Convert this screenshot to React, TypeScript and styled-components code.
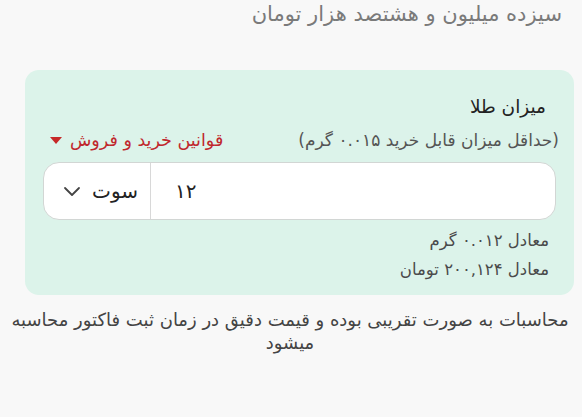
import styled, { createGlobalStyle } from 'styled-components';

const GlobalStyle = createGlobalStyle`
  body {
    margin: 0;
    background: #f8f8f8;
    font-family: "DejaVu Sans", "Noto Sans", sans-serif;
  }
`;

const Page = styled.div`
  direction: rtl;
`;

const AmountWords = styled.div`
  font-size: 21px;
  color: #7a7a7a;
  padding-right: 20px;
  line-height: 28px;
`;

const Card = styled.div`
  margin: 42px 8px 0 25px;
  background: #dcf3ea;
  border-radius: 14px;
  padding: 23px 15px 11px 18px;
`;

const Title = styled.div`
  font-size: 18.5px;
  color: #222;
  padding-right: 13px;
  line-height: 28px;
`;

const InfoRow = styled.div`
  display: flex;
  justify-content: space-between;
  align-items: center;
  margin-top: 6px;
  line-height: 26px;
`;

const Hint = styled.span`
  font-size: 17px;
  color: #555;
`;

const RulesLink = styled.button`
  display: flex;
  align-items: center;
  gap: 8px;
  background: none;
  border: 0;
  padding: 0 0 0 7px;
  font: inherit;
  font-size: 17.5px;
  color: #c0272d;
  cursor: pointer;
`;

const Triangle = styled.span`
  width: 0;
  height: 0;
  border-left: 6px solid transparent;
  border-right: 6px solid transparent;
  border-top: 7px solid #c62828;
`;

const InputBox = styled.div`
  display: flex;
  align-items: stretch;
  height: 58px;
  margin: 9px 3px 0 0;
  box-sizing: border-box;
  background: #fff;
  border: 1px solid #d2d6d4;
  border-radius: 16px;
  overflow: hidden;
`;

const AmountInput = styled.input`
  flex: 1;
  min-width: 0;
  border: 0;
  outline: none;
  direction: ltr;
  text-align: left;
  font: inherit;
  font-size: 20px;
  color: #222;
  padding: 0 24px;
  background: transparent;
  caret-color: #222;
`;

const UnitSelect = styled.div`
  display: flex;
  align-items: center;
  gap: 8px;
  width: 107px;
  padding: 0 12px 0 10px;
  box-sizing: border-box;
  border-right: 1px solid #d8d8d8;
  font-size: 20px;
  color: #222;
`;

const Equivalent = styled.div`
  font-size: 16.5px;
  color: #4a4a4a;
  padding-right: 10px;
  line-height: 29px;
  &:first-of-type {
    margin-top: 6px;
  }
`;

const Note = styled.p`
  margin: 13px 0 0;
  padding: 0 6px 0 4px;
  text-align: center;
  font-size: 18px;
  line-height: 23px;
  color: #444;
`;

function Chevron() {
  return (
    <svg width="24" height="24" viewBox="0 0 24 24" fill="none" stroke="#444" strokeWidth="1.8" strokeLinecap="round" strokeLinejoin="round">
      <path d="M5 9l7 7 7-7" />
    </svg>
  );
}

export default function App() {
  return (
    <>
      <GlobalStyle />
      <Page>
        <AmountWords>سیزده میلیون و هشتصد هزار تومان</AmountWords>
        <Card>
          <Title>میزان طلا</Title>
          <InfoRow>
            <Hint>(حداقل میزان قابل خرید ۰.۰۱۵ گرم)</Hint>
            <RulesLink>
              قوانین خرید و فروش
              <Triangle />
            </RulesLink>
          </InfoRow>
          <InputBox>
            <AmountInput defaultValue="۱۲" autoFocus />
            <UnitSelect>
              <span>سوت</span>
              <Chevron />
            </UnitSelect>
          </InputBox>
          <div>
            <Equivalent>معادل ۰.۰۱۲ گرم</Equivalent>
            <Equivalent>معادل ۲۰۰,۱۲۴ تومان</Equivalent>
          </div>
        </Card>
        <Note>محاسبات به صورت تقریبی بوده و قیمت دقیق در زمان ثبت فاکتور محاسبه میشود</Note>
      </Page>
    </>
  );
}
